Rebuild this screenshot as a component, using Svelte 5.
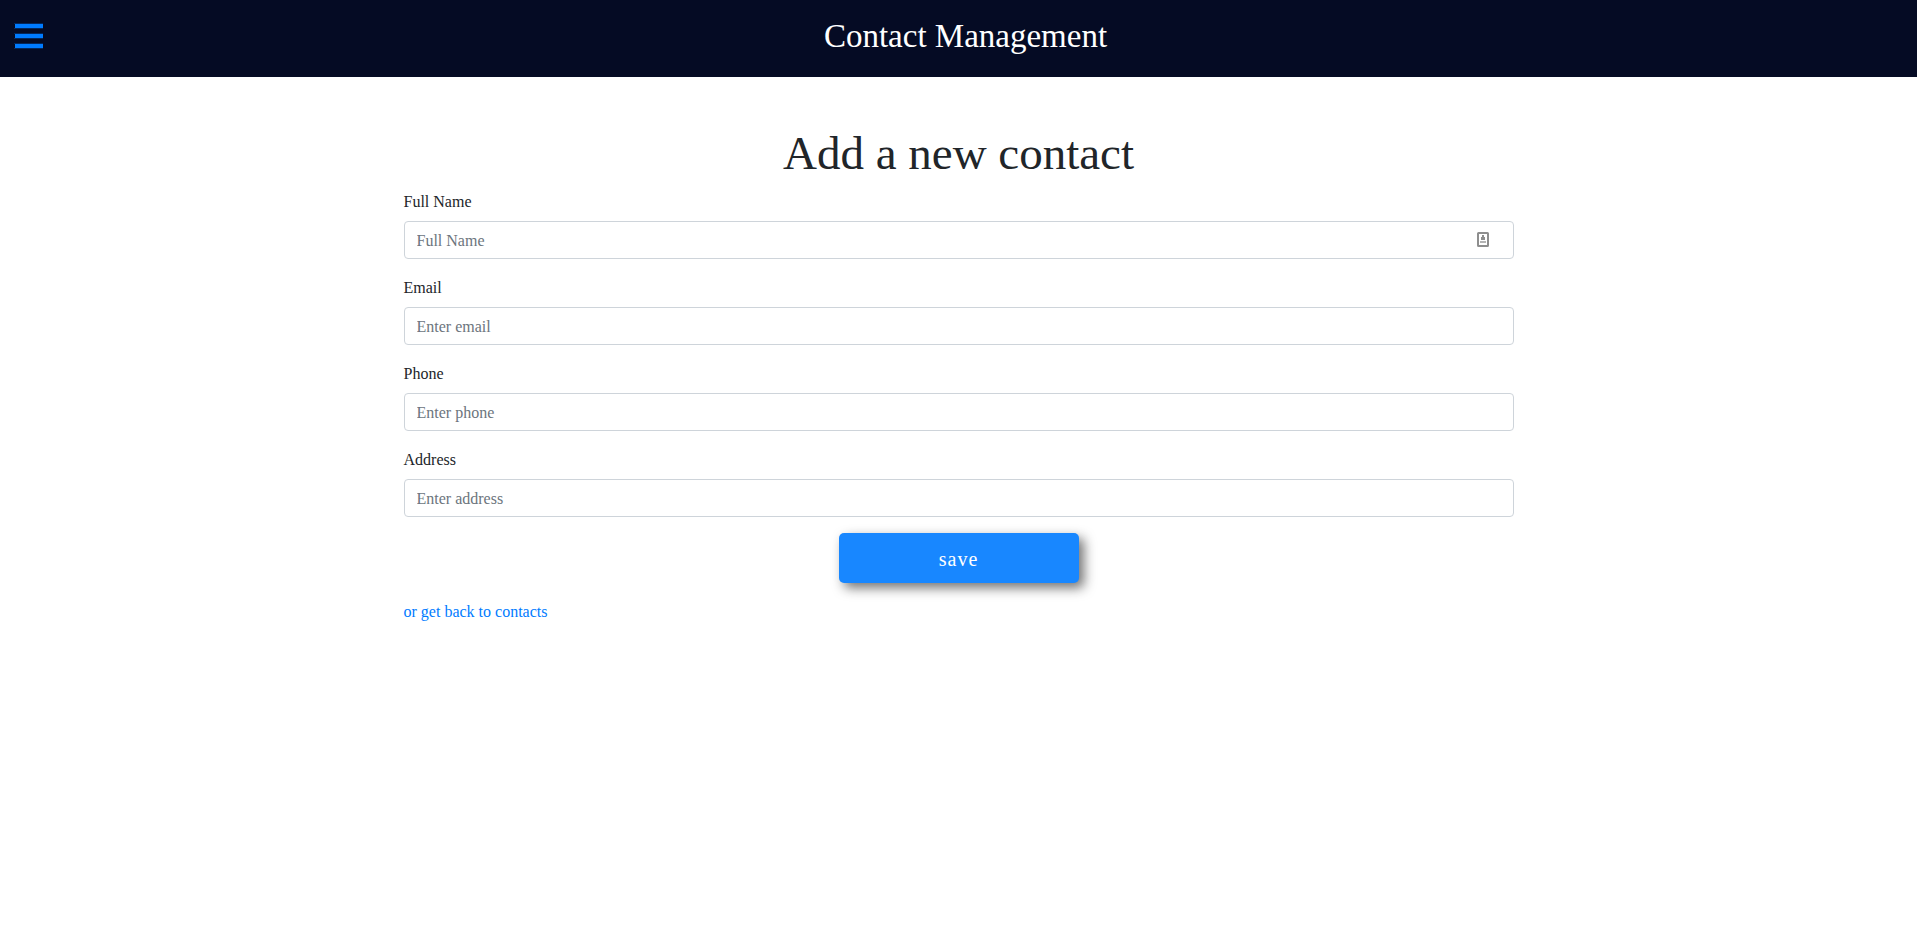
<script>
  const fields = [
    { id: 'name', label: 'Full Name', type: 'text', placeholder: 'Full Name', card: true },
    { id: 'email', label: 'Email', type: 'email', placeholder: 'Enter email' },
    { id: 'phone', label: 'Phone', type: 'tel', placeholder: 'Enter phone' },
    { id: 'address', label: 'Address', type: 'text', placeholder: 'Enter address' }
  ];
</script>

<header>
  <button class="menu" type="button" aria-label="Menu">
    <svg width="30" height="26" viewBox="0 0 30 26" aria-hidden="true">
      <path d="M1 1h28v4H1zM1 11h28v4H1zM1 21h28v4H1z" fill="#007bff" />
      <path d="M0 .5h29M0 5.5h29M0 10.5h29M0 15.5h29M0 20.5h29M0 25.5h29" stroke="#007bff" stroke-opacity="0.25" />
    </svg>
  </button>
  <p class="title">Contact Management</p>
</header>

<main>
  <h1>Add a new contact</h1>
  <form onsubmit={(e) => e.preventDefault()}>
    {#each fields as f}
      <div class="field">
        <label for={f.id}>{f.label}</label>
        <div class="control">
          <input id={f.id} type={f.type} placeholder={f.placeholder} />
          {#if f.card}
            <svg class="card" width="12" height="15" viewBox="0 0 12 15" aria-hidden="true">
              <rect x="1" y="1" width="10" height="13" rx="0.5" fill="#fff" stroke="#8e8e8e" stroke-width="2" />
              <path d="M5 3h2v2h1v3H4V5h1z" fill="#8e8e8e" />
              <path d="M3 9h6v2H3z" fill="#b4b4b4" />
            </svg>
          {/if}
        </div>
      </div>
    {/each}
    <button class="save" type="submit">save</button>
  </form>
  <a href="#contacts">or get back to contacts</a>
</main>

<style>
  :global(body) {
    margin: 0;
    background: #fff;
    color: #212529;
    font: 16px/26px "Liberation Serif", "Times New Roman", serif;
  }

  header {
    display: flex;
    align-items: center;
    height: 72px;
    padding: 0 30px 5px 14px;
    background: #050b24;
  }

  .menu {
    display: flex;
    padding: 0;
    border: 0;
    background: none;
    cursor: pointer;
  }

  .title {
    flex: 1;
    margin: 0;
    color: #fff;
    font-size: 33px;
    line-height: 40px;
    text-align: center;
  }

  main {
    max-width: 1110px;
    margin: 0 auto;
    padding: 46px 15px 24px;
  }

  h1 {
    margin: 0 0 6px;
    font-size: 47px;
    line-height: 60px;
    font-weight: 400;
    text-align: center;
  }

  .field {
    margin-bottom: 16px;
  }

  label {
    display: block;
    margin-bottom: 6px;
  }

  .control {
    position: relative;
  }

  input {
    display: block;
    box-sizing: border-box;
    width: 100%;
    height: 38px;
    padding: 7px 12px 5px;
    border: 1px solid #ced4da;
    border-radius: 4px;
    background: #fff;
    color: #495057;
    font: inherit;
    line-height: 24px;
  }

  input::placeholder {
    color: #6c757d;
    opacity: 1;
  }

  .card {
    position: absolute;
    top: 11px;
    right: 25px;
  }

  .save {
    display: block;
    width: 240px;
    height: 50px;
    margin: 0 auto 16px;
    padding: 2px 0 0;
    border: 0;
    border-radius: 5px;
    background: #007bff;
    box-shadow: 5px 5px 12px #666;
    color: #fff;
    font: 20px/30px "Liberation Serif", "Times New Roman", serif;
    letter-spacing: 1px;
    opacity: 0.9;
    cursor: pointer;
  }

  a {
    color: #007bff;
    text-decoration: none;
  }
</style>
